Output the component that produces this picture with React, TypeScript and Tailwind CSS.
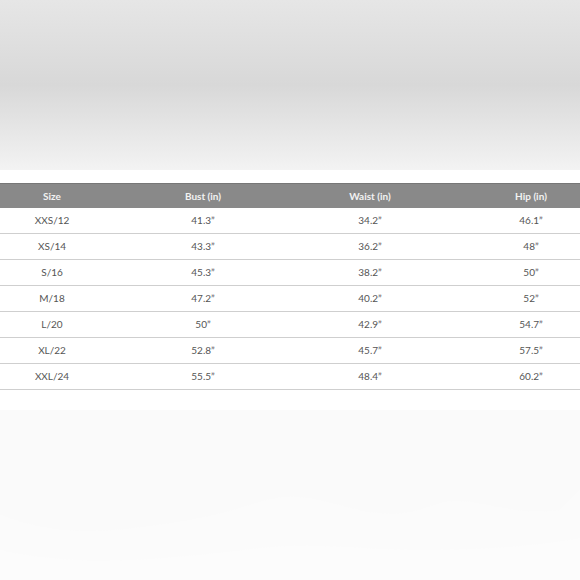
const rows = [
  ["XXS/12", "41.3\u201D", "34.2\u201D", "46.1\u201D"],
  ["XS/14", "43.3\u201D", "36.2\u201D", "48\u201D"],
  ["S/16", "45.3\u201D", "38.2\u201D", "50\u201D"],
  ["M/18", "47.2\u201D", "40.2\u201D", "52\u201D"],
  ["L/20", "50\u201D", "42.9\u201D", "54.7\u201D"],
  ["XL/22", "52.8\u201D", "45.7\u201D", "57.5\u201D"],
  ["XXL/24", "55.5\u201D", "48.4\u201D", "60.2\u201D"],
];

const cols = "grid grid-cols-[104px_198px_136px_142px] items-center";

const App = () => {
  return (
    <div
      className="w-[580px] h-[580px] overflow-hidden bg-white flex flex-col"
      style={{ fontFamily: "Lato, 'Open Sans', sans-serif" }}
    >
      {/* top grey banner */}
      <div className="h-[170px] bg-gradient-to-b from-[#e6e6e6] via-[#d8d8d8] to-[#f3f3f3]" />
      <div className="h-[13px] bg-white" />

      {/* header */}
      <div className={`${cols} h-[25px] bg-[#898989] border-t border-[#777] text-[10px] font-bold text-[#f2f2f2]`}>
        <div className="text-center">Size</div>
        <div className="text-center">Bust (in)</div>
        <div className="text-center">Waist (in)</div>
        <div className="text-center pl-[44px]">Hip (in)</div>
      </div>

      {/* rows */}
      <div className="flex flex-col">
        {rows.map((r) => (
          <div
            key={r[0]}
            className={`${cols} h-[26px] border-b-[1.5px] border-[#cfcfcf] text-[10px] text-[#555]`}
          >
            <div className="text-center">{r[0]}</div>
            <div className="text-center">{r[1]}</div>
            <div className="text-center">{r[2]}</div>
            <div className="text-center pl-[44px]">{r[3]}</div>
          </div>
        ))}
      </div>

      <div className="h-[20px] bg-white" />

      {/* faint bottom backdrop */}
      <div className="relative flex-1 bg-[#fafafa]">
        <svg className="absolute inset-0" width="580" height="170" viewBox="0 0 580 170">
          <path
            d="M0 104 C60 130 120 122 200 108 C260 96 270 80 320 90 C360 100 390 112 430 96 C470 80 500 108 560 100 L580 80 L580 170 L0 170 Z"
            fill="#fbfbfb"
          />
          <path
            d="M0 140 C80 158 160 150 260 138 C320 132 360 140 420 140 C480 140 540 136 580 128 L580 170 L0 170 Z"
            fill="#fcfcfc"
          />
        </svg>
      </div>
    </div>
  );
};

export default App;
